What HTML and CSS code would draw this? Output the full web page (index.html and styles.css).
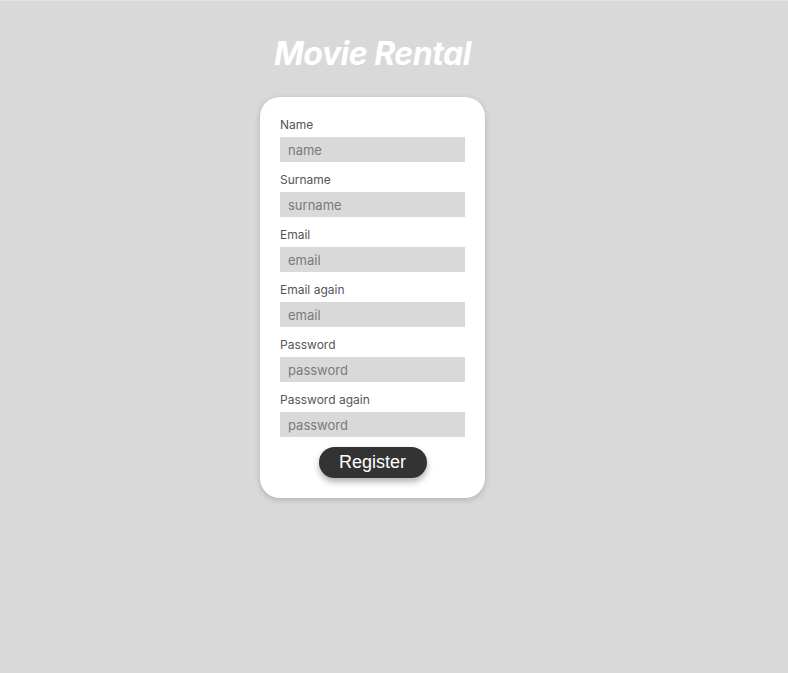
FILE: index.html
```html
<!DOCTYPE html>
<html lang="en">
<head>
<meta charset="utf-8">
<title>Movie Rental</title>
<link rel="stylesheet" href="styles.css">
</head>
<body>
<div class="page">
  <h1 class="title">Movie Rental</h1>
  <form class="card">
    <div class="field">
      <label class="label">Name</label>
      <input class="input" type="text" placeholder="name">
    </div>
    <div class="field">
      <label class="label">Surname</label>
      <input class="input" type="text" placeholder="surname">
    </div>
    <div class="field">
      <label class="label">Email</label>
      <input class="input" type="text" placeholder="email">
    </div>
    <div class="field">
      <label class="label">Email again</label>
      <input class="input" type="text" placeholder="email">
    </div>
    <div class="field">
      <label class="label">Password</label>
      <input class="input" type="text" placeholder="password">
    </div>
    <div class="field">
      <label class="label">Password again</label>
      <input class="input" type="text" placeholder="password">
    </div>
    <div class="actions">
      <button class="button" type="button">Register</button>
    </div>
  </form>
</div>
</body>
</html>
```

FILE: styles.css
```css
html, body {
  margin: 0;
  padding: 0;
  height: 100%;
}
body {
  background: #d9d9d9;
  border-top: 1px solid #e2e2e2;
  box-sizing: border-box;
  font-family: Inter, "Noto Sans", sans-serif;
}
.page {
  width: 745px;
  display: flex;
  flex-direction: column;
  align-items: center;
}
.title {
  margin: 33px 0 24px;
  font-size: 32px;
  line-height: 39px;
  font-weight: 700;
  font-style: italic;
  color: #ffffff;
  letter-spacing: -0.5px;
}
.card {
  width: 185px;
  padding: 20px;
  background: #ffffff;
  border-radius: 20px;
  box-shadow: 0 2px 6px rgba(0,0,0,0.18);
  display: flex;
  flex-direction: column;
}
.field {
  display: flex;
  flex-direction: column;
  margin-bottom: 10px;
}
.label {
  font-size: 12px;
  line-height: 15px;
  color: #555555;
  margin-bottom: 5px;
}
.input {
  box-sizing: border-box;
  width: 185px;
  height: 25px;
  border: none;
  outline: none;
  background: #d9d9d9;
  padding: 0 8px;
  margin: 0;
  font-family: Inter, "Noto Sans", sans-serif;
  font-size: 13px;
  color: #333;
}
.input::placeholder {
  color: #7a7a7a;
}
.actions {
  display: flex;
  justify-content: center;
}
.button {
  width: 108px;
  height: 31px;
  border: none;
  border-radius: 16px;
  background: #333333;
  color: #ffffff;
  font-family: "Liberation Sans", Arial, sans-serif;
  font-size: 18px;
  padding: 0;
  box-shadow: 0 4px 6px rgba(0,0,0,0.3);
}
```
